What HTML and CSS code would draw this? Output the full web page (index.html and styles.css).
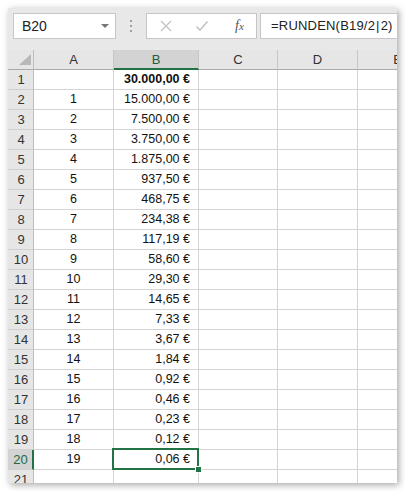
FILE: index.html
```html
<!DOCTYPE html>
<html lang="de">
<head>
<meta charset="utf-8">
<title>Excel</title>
<link rel="stylesheet" href="styles.css">
</head>
<body>
<div class="window">
  <div class="fbar">
    <div class="namebox"><span class="nb-text">B20</span><span class="nb-arrow"></span></div>
    <div class="dots"><i></i><i></i><i></i></div>
    <div class="iconbox">
      <svg class="ic" width="14" height="14" viewBox="0 0 14 14"><path d="M2 2 L12 12 M12 2 L2 12" stroke="#c4c4c4" stroke-width="1.4" fill="none"/></svg>
      <svg class="ic" width="14" height="14" viewBox="0 0 14 14"><path d="M1.5 7.5 L5 11 L12.5 2.5" stroke="#c4c4c4" stroke-width="1.6" fill="none"/></svg>
      <span class="fx">f<small>x</small></span>
    </div>
    <div class="formula">=RUNDEN(B19/2<span class="bar">|</span>2)</div>
  </div>
  <div class="grid" id="grid">
    <div class="corner"><span class="tri"></span></div>
    <div class="ch">A</div>
    <div class="ch sel">B</div>
    <div class="ch">C</div>
    <div class="ch">D</div>
    <div class="ch">E</div>
  </div>
</div>
<script src="app.js"></script>
</body>
</html>
```
FILE: app.js
```js
(function () {
  var vals = ["30.000,00 €","15.000,00 €","7.500,00 €","3.750,00 €","1.875,00 €","937,50 €","468,75 €","234,38 €","117,19 €","58,60 €","29,30 €","14,65 €","7,33 €","3,67 €","1,84 €","0,92 €","0,46 €","0,23 €","0,12 €","0,06 €"];
  var g = document.getElementById("grid");
  var html = "";
  for (var r = 1; r <= 21; r++) {
    var active = r === 20;
    html += '<div class="rh' + (active ? ' sel' : '') + '">' + r + '</div>';
    html += '<div class="c ca">' + (r >= 2 && r <= 20 ? (r - 1) : '') + '</div>';
    var v = r <= 20 ? vals[r - 1] : '';
    html += '<div class="c cb' + (r === 1 ? ' bold' : '') + (active ? ' active' : '') + '">' + v + (active ? '<span class="handle"></span>' : '') + '</div>';
    html += '<div class="c"></div><div class="c"></div><div class="c"></div>';
  }
  g.insertAdjacentHTML("beforeend", html);
})();
```
FILE: styles.css
```css
html, body { margin: 0; padding: 0; background: #fff; }
body { width: 405px; height: 491px; overflow: hidden; }
.window {
  margin: 8px 0 0 8px;
  width: 389px;
  height: 475px;
  overflow: hidden;
  background: #fff;
  box-shadow: 2px 2px 7px rgba(0,0,0,0.35);
  font-family: "Liberation Sans", Arial, sans-serif;
}
.fbar {
  height: 42px;
  background: #e8e8e8;
  display: flex;
  align-items: flex-start;
  padding: 5px 0 0 5px;
  box-sizing: border-box;
}
.namebox {
  flex: none;
  width: 103px; height: 26px;
  box-sizing: border-box;
  background: #fff;
  border: 1px solid #c6c6c6;
  display: flex; align-items: center; justify-content: space-between;
  padding: 0 6px 0 8px;
}
.nb-text { font-size: 14px; color: #222; }
.nb-arrow {
  width: 0; height: 0;
  border-left: 4px solid transparent;
  border-right: 4px solid transparent;
  border-top: 4px solid #777;
}
.dots {
  flex: none;
  width: 30px; height: 26px;
  display: flex; flex-direction: column; align-items: center; justify-content: center; gap: 3px;
}
.dots i { display: block; width: 2px; height: 2px; background: #a0a0a0; }
.iconbox {
  flex: none;
  width: 111px; height: 26px;
  box-sizing: border-box;
  background: #fff;
  border: 1px solid #c6c6c6;
  display: flex; align-items: center;
  padding-left: 12px;
  gap: 22px;
}
.fx {
  font-family: "Liberation Serif", "Times New Roman", serif;
  font-style: italic;
  font-size: 14px;
  color: #555;
  margin-left: 4px;
}
.fx small { font-size: 11px; }
.formula {
  margin-left: 3px;
  height: 26px;
  flex: 1;
  min-width: 0;
  overflow: hidden;
  box-sizing: border-box;
  background: #fff;
  border: 1px solid #c6c6c6;
  border-right: none;
  font-size: 13px;
  letter-spacing: 0.2px;
  color: #222;
  line-height: 24px;
  padding-left: 10px;
  white-space: nowrap;
}
.bar { margin: 0 1px; }
.grid {
  display: grid;
  grid-template-columns: 26px 80px 85px 79px 80px 80px;
  grid-auto-rows: 20px;
  font-size: 12.5px;
  color: #111;
}
.grid > div { box-sizing: border-box; white-space: nowrap; }
.corner, .ch, .rh {
  background: #e6e6e6;
  color: #333;
}
.corner {
  border-right: 1px solid #bdbdbd;
  border-bottom: 1px solid #ababab;
  position: relative;
}
.tri {
  position: absolute;
  right: 2px; bottom: 4px;
  width: 0; height: 0;
  border-left: 12px solid transparent;
  border-bottom: 11px solid #b9b9b9;
}
.ch {
  border-right: 1px solid #c6c6c6;
  border-bottom: 1px solid #ababab;
  text-align: center;
  line-height: 19px;
  font-size: 13px;
}
.ch.sel {
  background: #d3d3d3;
  color: #1e5e3a;
  border-bottom: 2px solid #217346;
}
.rh {
  border-right: 1px solid #bdbdbd;
  border-bottom: 1px solid #d0d0d0;
  text-align: center;
  line-height: 19px;
  font-size: 13px;
  padding-left: 1px;
}
.rh.sel {
  background: #d3d3d3;
  color: #1e6b3f;
  border-right: 2px solid #217346;
}
.c {
  border-right: 1px solid #d4d4d4;
  border-bottom: 1px solid #d4d4d4;
  line-height: 19px;
}
.ca { text-align: center; }
.cb { text-align: right; padding-right: 8px; }
.bold { font-weight: bold; }
.active { position: relative; }
.active::after {
  content: "";
  position: absolute;
  left: -2px; top: -2px; right: -1px; bottom: -1px;
  border: 2px solid #217346;
}
.handle {
  position: absolute;
  right: -4px; bottom: -4px;
  width: 5px; height: 5px;
  background: #217346;
  border: 1px solid #fff;
  z-index: 2;
}
```
